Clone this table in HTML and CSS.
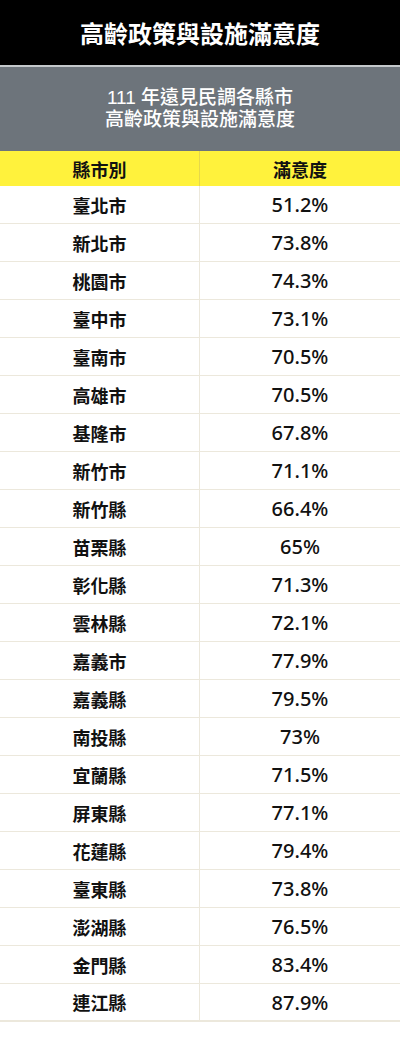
FILE: index.html
```html
<!DOCTYPE html>
<html lang="zh-Hant">
<head>
<meta charset="utf-8">
<link rel="stylesheet" href="styles.css">
</head>
<body>
<div class="page">
  <header class="title">高齡政策與設施滿意度</header>
  <div class="subtitle">
    <p class="subtitle-text">111 年遠見民調各縣市<br>高齡政策與設施滿意度</p>
  </div>
  <div class="table">
    <div class="row head"><div class="cell">縣市別</div><div class="cell">滿意度</div></div>
    <div class="row"><div class="cell name">臺北市</div><div class="cell val">51.2%</div></div>
    <div class="row"><div class="cell name">新北市</div><div class="cell val">73.8%</div></div>
    <div class="row"><div class="cell name">桃園市</div><div class="cell val">74.3%</div></div>
    <div class="row"><div class="cell name">臺中市</div><div class="cell val">73.1%</div></div>
    <div class="row"><div class="cell name">臺南市</div><div class="cell val">70.5%</div></div>
    <div class="row"><div class="cell name">高雄市</div><div class="cell val">70.5%</div></div>
    <div class="row"><div class="cell name">基隆市</div><div class="cell val">67.8%</div></div>
    <div class="row"><div class="cell name">新竹市</div><div class="cell val">71.1%</div></div>
    <div class="row"><div class="cell name">新竹縣</div><div class="cell val">66.4%</div></div>
    <div class="row"><div class="cell name">苗栗縣</div><div class="cell val">65%</div></div>
    <div class="row"><div class="cell name">彰化縣</div><div class="cell val">71.3%</div></div>
    <div class="row"><div class="cell name">雲林縣</div><div class="cell val">72.1%</div></div>
    <div class="row"><div class="cell name">嘉義市</div><div class="cell val">77.9%</div></div>
    <div class="row"><div class="cell name">嘉義縣</div><div class="cell val">79.5%</div></div>
    <div class="row"><div class="cell name">南投縣</div><div class="cell val">73%</div></div>
    <div class="row"><div class="cell name">宜蘭縣</div><div class="cell val">71.5%</div></div>
    <div class="row"><div class="cell name">屏東縣</div><div class="cell val">77.1%</div></div>
    <div class="row"><div class="cell name">花蓮縣</div><div class="cell val">79.4%</div></div>
    <div class="row"><div class="cell name">臺東縣</div><div class="cell val">73.8%</div></div>
    <div class="row"><div class="cell name">澎湖縣</div><div class="cell val">76.5%</div></div>
    <div class="row"><div class="cell name">金門縣</div><div class="cell val">83.4%</div></div>
    <div class="row last"><div class="cell name">連江縣</div><div class="cell val">87.9%</div></div>
  </div>
</div>
</body>
</html>
```

FILE: styles.css
```css
html, body {
  margin: 0;
  padding: 0;
  background: #ffffff;
}
body {
  font-family: "Noto Sans CJK TC", "Noto Sans", sans-serif;
  color: #111111;
}
.page {
  width: 400px;
}
.title {
  box-sizing: border-box;
  height: 67px;
  background: #000000;
  color: #ffffff;
  font-size: 24px;
  font-weight: 700;
  display: flex;
  align-items: center;
  justify-content: center;
  border-bottom: 2px solid #c4c8cb;
}
.subtitle {
  height: 84px;
  background: #6d747b;
  display: flex;
  align-items: center;
  justify-content: center;
}
.subtitle-text {
  margin: 0;
  color: #ffffff;
  font-family: "Liberation Sans", "Noto Sans CJK TC", sans-serif;
  font-size: 19px;
  line-height: 22px;
  font-weight: 500;
  text-align: center;
}
.table {
  display: flex;
  flex-direction: column;
}
.row {
  display: grid;
  grid-template-columns: 1fr 1fr;
  height: 38px;
  border-bottom: 1px solid #ece8dc;
  box-sizing: border-box;
}
.cell {
  display: flex;
  align-items: center;
  justify-content: center;
  font-size: 18px;
}
.cell:first-child {
  border-right: 1px solid #ece8dc;
}
.head {
  background: #fff23c;
  height: 35px;
  border-bottom: none;
  font-weight: 700;
}
.head .cell:first-child {
  border-right-color: #e6d84a;
}
.name {
  font-weight: 700;
}
.val {
  font-family: "Noto Sans", sans-serif;
  font-size: 20px;
  font-weight: 500;
}
.last {
  border-bottom: 2px solid #ece8dc;
}
```
